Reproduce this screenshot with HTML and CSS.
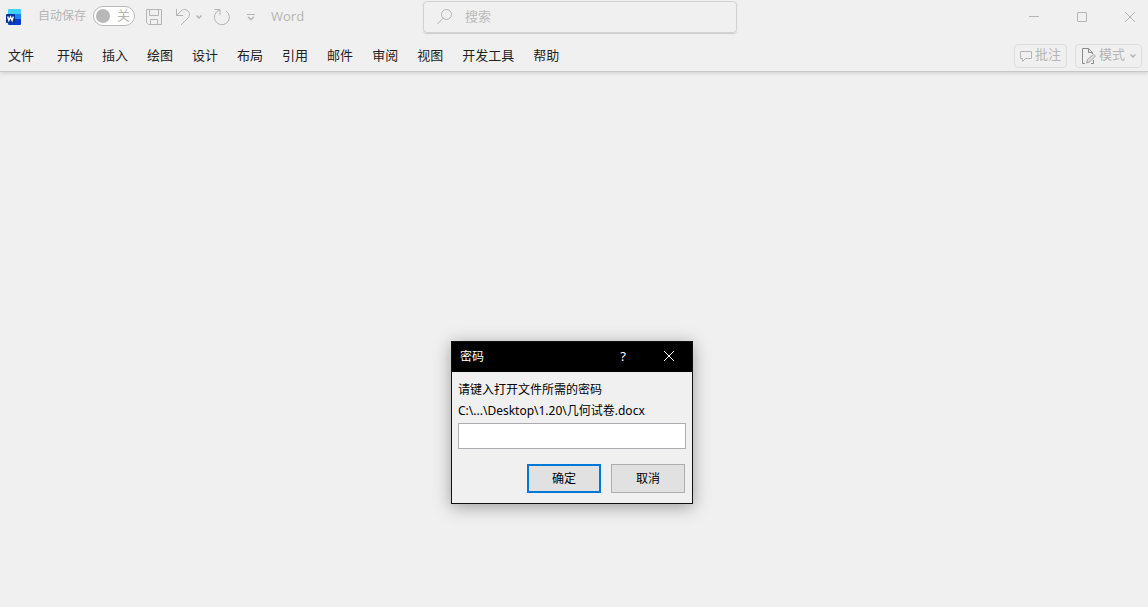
FILE: index.html
```html
<!DOCTYPE html>
<html lang="zh-CN">
  <head>
    <meta charset="UTF-8" />
    <meta name="viewport" content="width=device-width, initial-scale=1.0" />
    <title>Word</title>
    <link rel="stylesheet" href="styles.css">
  </head>
  <body>
    <header class="ribbon">
      <div class="titlebar">
        <div class="quick-access">
          <svg class="logo" width="15" height="16" viewBox="0 0 15 16">
            <path d="M3 0h11a1 1 0 0 1 1 1v5H2V1a1 1 0 0 1 1-1z" fill="#3fd0fb" />
            <path d="M2 5h13v6H2z" fill="#1683ee" />
            <path d="M2 10h13v5a1 1 0 0 1-1 1H3a1 1 0 0 1-1-1z" fill="#0a3cc8" />
            <rect x="0" y="5" width="9" height="9" rx="1" fill="#0a2f9e" />
            <path d="M1.700 7.500l1.200 4 1.600-3.500 1.600 3.500 1.200-4" fill="none" stroke="#fff" stroke-width="1.4" />
          </svg>
          <label class="autosave-label" for="autosave">自动保存</label>
          <label class="switch">
            <input type="checkbox" id="autosave" />
            <span class="knob"></span>
            <span>关</span>
          </label>
          <button class="icon-btn save" aria-label="保存">
            <svg width="16" height="16" viewBox="0 0 16 16">
              <path d="M.5.5h15v15h-13l-2-2zM3.500.5v6h9v-6M4.500 15.500v-5h7v5" />
            </svg>
          </button>
          <button class="icon-btn undo" aria-label="撤消">
            <svg width="28" height="18" viewBox="0 0 28 18">
              <path d="M1.500 1v6.500H8M1.500 7.500L6 3C8 1 11 1 13 3s2 5 0 7L6 17" />
              <path class="thick" d="M21.500 7.500l2.500 2.500 2.500-2.500" />
            </svg>
          </button>
          <button class="icon-btn redo" aria-label="重复">
            <svg width="18" height="18" viewBox="0 0 18 18">
              <path d="M1.500 1.500h5.500v5.500M7 2A7.500 7.500 0 1 0 13 3" />
            </svg>
          </button>
          <button class="icon-btn more" aria-label="自定义快速访问工具栏">
            <svg width="8" height="8" viewBox="0 0 8 8">
              <path d="M0 1.500h8" />
              <path class="thick" d="M1 4l3 2.500 3-2.500" />
            </svg>
          </button>
          <span class="app-name">Word</span>
        </div>

        <label class="search">
          <svg width="16" height="16" viewBox="0 0 16 16">
            <circle cx="9.500" cy="5.500" r="5" />
            <path d="M6 9.200L.5 15" />
          </svg>
          <input type="search" placeholder="搜索" aria-label="搜索" />
        </label>

        <div class="window-controls">
          <button class="icon-btn" aria-label="最小化">
            <svg width="10" height="10" viewBox="0 0 10 10"><path d="M0 4.500h10" /></svg>
          </button>
          <button class="icon-btn" aria-label="最大化">
            <svg width="10" height="10" viewBox="0 0 10 10"><rect x=".5" y=".5" width="9" height="9" rx=".5" /></svg>
          </button>
          <button class="icon-btn" aria-label="关闭">
            <svg width="10" height="10" viewBox="0 0 10 10"><path d="M0 0l10 10M10 0L0 10" /></svg>
          </button>
        </div>
      </div>

      <div class="tab-row">
        <nav class="tabs">
          <button class="tab file-tab">文件</button>
          <button class="tab">开始</button>
          <button class="tab">插入</button>
          <button class="tab">绘图</button>
          <button class="tab">设计</button>
          <button class="tab">布局</button>
          <button class="tab">引用</button>
          <button class="tab">邮件</button>
          <button class="tab">审阅</button>
          <button class="tab">视图</button>
          <button class="tab">开发工具</button>
          <button class="tab">帮助</button>
        </nav>
        <div class="actions">
          <button class="action">
            <svg width="12" height="12" viewBox="0 0 12 12">
              <path d="M.5 1.500h11v7h-6l-3 3v-3h-2z" />
            </svg>
            <span>批注</span>
          </button>
          <button class="action">
            <svg width="15" height="16" viewBox="0 0 15 16">
              <path class="dark" d="M4 15.500H1.500V.5h6l4 4V6M7.500.5v4h4M12.500 12v3.500H10" />
              <path class="pencil" d="M5.500 15l1-3.500 6-5 2 1.500-6 6z" />
            </svg>
            <span>模式</span>
            <svg class="chevron" width="6" height="4" viewBox="0 0 6 4"><path class="thick" d="M.5.5L3 3 5.500.5" /></svg>
          </button>
        </div>
      </div>
    </header>

    <form class="dialog" role="dialog" aria-labelledby="dialog-title">
      <div class="dialog-header">
        <h1 class="dialog-title" id="dialog-title">密码</h1>
        <button class="dialog-btn" type="button" aria-label="帮助">?</button>
        <button class="dialog-btn" type="button" aria-label="关闭">
          <svg width="10" height="10" viewBox="0 0 10 10"><path d="M0 0l10 10M10 0L0 10" /></svg>
        </button>
      </div>
      <div class="dialog-body">
        <label for="password">请键入打开文件所需的密码<br />C:\...\Desktop\1.20\几何试卷.docx</label>
        <input class="password" type="password" id="password" />
        <div class="dialog-footer">
          <button class="btn btn-default" type="button">确定</button>
          <button class="btn" type="button">取消</button>
        </div>
      </div>
    </form>
  </body>
</html>
```

FILE: styles.css
```css
* {
  box-sizing: border-box;
}

body {
  margin: 0;
  min-height: 100vh;
  background-color: #f0f0f0;
  color: #222;
  font-family: "Open Sans", "Noto Sans CJK SC", sans-serif;
  font-size: 13px;
  line-height: 20px;
}

button,
input {
  margin: 0;
  padding: 0;
  border: none;
  background: none;
  color: inherit;
  font: inherit;
}

svg {
  display: block;
  flex: none;
  fill: none;
  stroke: currentColor;
  stroke-width: 1;
}

.thick {
  stroke-width: 1.5;
}

.logo {
  stroke: none;
}

.ribbon {
  height: 72px;
  border-bottom: 1px solid #c8c8c8;
  box-shadow: 0 1px 4px rgba(0, 0, 0, 0.15);
}

.titlebar {
  display: grid;
  grid-template-columns: 1fr auto 1fr;
  height: 40px;
  color: #b5b5b5;
}

.quick-access {
  display: flex;
  align-items: center;
  height: 33px;
  padding-left: 6px;
}

.autosave-label {
  margin-left: 17px;
  padding-bottom: 2px;
  font-size: 12px;
}

.switch {
  display: flex;
  align-items: center;
  justify-content: space-between;
  width: 42px;
  height: 20px;
  margin-left: 7px;
  padding: 0 4px 2px 2px;
  border: 1px solid #b8b8b8;
  border-radius: 10px;
  background-color: #fff;
  line-height: 16px;
}

.quick-access .switch {
  margin-bottom: 2px;
}

.switch input {
  position: absolute;
  opacity: 0;
}

.knob {
  width: 14px;
  height: 14px;
  margin-top: 2px;
  border-radius: 50%;
  background-color: #b8b8b8;
}

.icon-btn {
  display: flex;
  align-items: center;
  justify-content: center;
}

.save {
  margin-left: 11px;
}

.undo {
  margin-left: 13px;
}

.redo {
  margin-left: 10px;
}

.more {
  margin-left: 16px;
}

.app-name {
  margin-left: 16px;
  padding-bottom: 2px;
}

.search {
  display: flex;
  align-items: center;
  width: 314px;
  height: 32px;
  margin: 1px 0 0 12px;
  padding: 0 13px;
  border: 1px solid #d2d2d2;
  border-radius: 4px;
  box-shadow: 0 1px 1px rgba(0, 0, 0, 0.15);
}

.search input {
  flex: 1;
  min-width: 0;
  margin-left: 12px;
  padding-bottom: 2px;
}

.search input::placeholder {
  color: #bbb;
}

.window-controls {
  display: flex;
  justify-content: flex-end;
  height: 33px;
  padding-right: 13px;
  gap: 38px;
}

.tab-row {
  display: flex;
  justify-content: space-between;
  align-items: center;
  height: 31px;
  padding: 0 6px 0 8px;
}

.tabs {
  display: flex;
  gap: 19px;
  padding-bottom: 2px;
}

.tab {
  white-space: nowrap;
}

.file-tab {
  margin-right: 4px;
}

.actions {
  display: flex;
  gap: 8px;
}

.action {
  display: flex;
  align-items: center;
  gap: 3px;
  height: 24px;
  padding: 0 5px;
  border: 1px solid #ddd;
  border-radius: 4px;
  color: #b5b5b5;
  white-space: nowrap;
}

.action span {
  padding-bottom: 4px;
}

.action .dark {
  stroke: #8a8a8a;
}

.action .pencil {
  fill: #ddd;
  stroke: #a5a5a5;
}

.action .chevron {
  margin-left: 2px;
}

.dialog {
  position: absolute;
  top: 341px;
  left: 451px;
  width: 242px;
  border: 1px solid #111;
  background-color: #f0f0f0;
  box-shadow: 0 3px 16px rgba(0, 0, 0, 0.35);
  color: #000;
  font-family: "Noto Sans", "Noto Sans CJK SC", sans-serif;
  font-size: 12px;
}

.dialog-header {
  display: flex;
  height: 30px;
  background-color: #000;
  color: #fff;
}

.dialog-title {
  flex: 1;
  margin: 0;
  padding-left: 8px;
  font-size: 12px;
  font-weight: normal;
  line-height: 30px;
}

.dialog-btn {
  display: flex;
  align-items: center;
  justify-content: center;
  width: 46px;
  padding-bottom: 2px;
  font-size: 13px;
}

.dialog-body {
  padding: 7px 6px 10px;
}

.dialog-body label {
  display: block;
  line-height: 21px;
}

.password {
  display: block;
  width: 100%;
  height: 26px;
  margin-top: 2px;
  padding: 0 4px;
  border: 1px solid #ababb0;
  background-color: #fff;
}

.dialog-footer {
  display: flex;
  justify-content: flex-end;
  gap: 10px;
  margin-top: 15px;
  padding-right: 1px;
}

.btn {
  width: 74px;
  height: 29px;
  border: 1px solid #adadad;
  background-color: #e1e1e1;
}

.btn-default {
  border: 2px solid #0078d7;
}
```
